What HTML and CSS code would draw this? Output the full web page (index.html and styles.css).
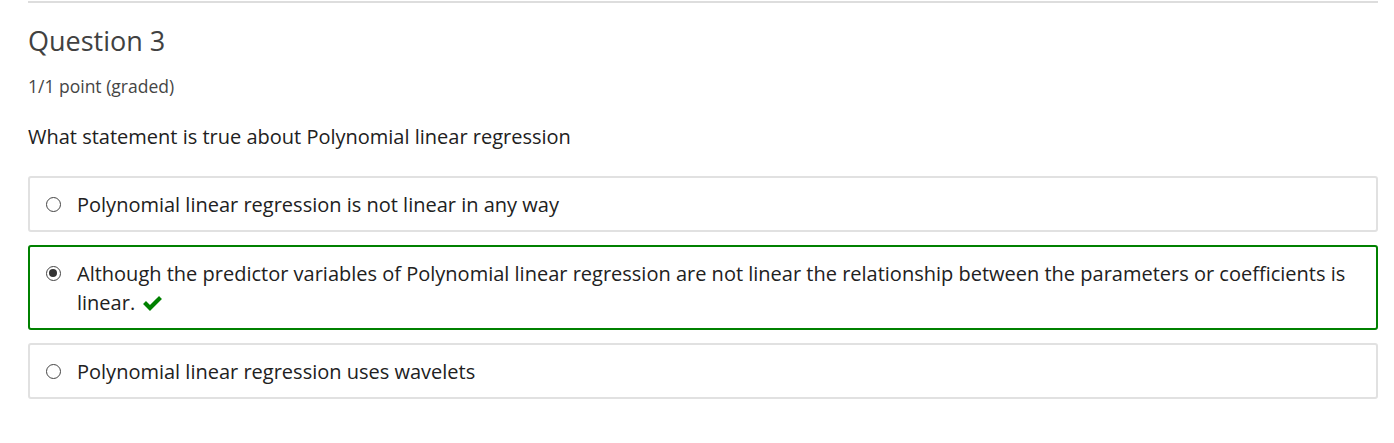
FILE: index.html
```html
<!DOCTYPE html>
<html>
<head>
<meta charset="utf-8">
<link rel="stylesheet" href="styles.css">
</head>
<body>
<div class="problem">
  <h3 class="title">Question 3</h3>
  <div class="points">1/1 point (graded)</div>
  <p class="prompt">What statement is true about Polynomial linear regression</p>
  <div class="choices">
    <label class="choice">
      <span class="radio"></span>
      <span class="text">Polynomial linear regression is not linear in any way</span>
    </label>
    <label class="choice correct">
      <span class="radio checked"></span>
      <span class="text">Although the predictor variables of Polynomial linear regression are not linear the relationship between the parameters or coefficients is linear. <svg class="check" viewBox="0 0 20 16" width="21" height="17"><path d="M1 8.5 L3.8 5.6 L7.6 9.4 L16.2 0.8 L19 3.7 L7.6 15.1 Z" fill="#008100"/></svg></span>
    </label>
    <label class="choice">
      <span class="radio"></span>
      <span class="text">Polynomial linear regression uses wavelets</span>
    </label>
  </div>
</div>
</body>
</html>
```

FILE: styles.css
```css
html, body {
  margin: 0;
  padding: 0;
  background: #fff;
}
body {
  font-family: "Open Sans", "Liberation Sans", sans-serif;
  color: #313131;
}
.problem {
  margin: 1px 16px 0 28px;
  border-top: 2px solid #dddddd;
}
.title {
  margin: 0;
  padding-top: 20px;
  font-size: 27px;
  font-weight: 400;
  line-height: 36px;
  color: #414141;
}
.points {
  margin-top: 15px;
  font-size: 17.5px;
  line-height: 24px;
  color: #454545;
}
.prompt {
  margin: 24px 0 0;
  font-size: 20px;
  line-height: 29px;
  color: #212121;
}
.choices {
  margin-top: 25px;
  display: flex;
  flex-direction: column;
  gap: 13px;
}
.choice {
  display: flex;
  align-items: flex-start;
  border: 2px solid #e1e1e1;
  border-radius: 3px;
  padding: 11.5px 20px 11.5px 16px;
  font-size: 20px;
  line-height: 29px;
  color: #212121;
}
.choice.correct {
  border-color: #008100;
}
.radio {
  flex: none;
  box-sizing: border-box;
  width: 15px;
  height: 15px;
  border: 1.2px solid #444;
  border-radius: 50%;
  margin-top: 7px;
  margin-right: 16px;
  position: relative;
  background: #fff;
}
.radio.checked::after {
  content: "";
  position: absolute;
  left: 2.3px;
  top: 2.3px;
  width: 8px;
  height: 8px;
  border-radius: 50%;
  background: #333;
}
.check {
  vertical-align: -2px;
  margin-left: 2px;
}
```
